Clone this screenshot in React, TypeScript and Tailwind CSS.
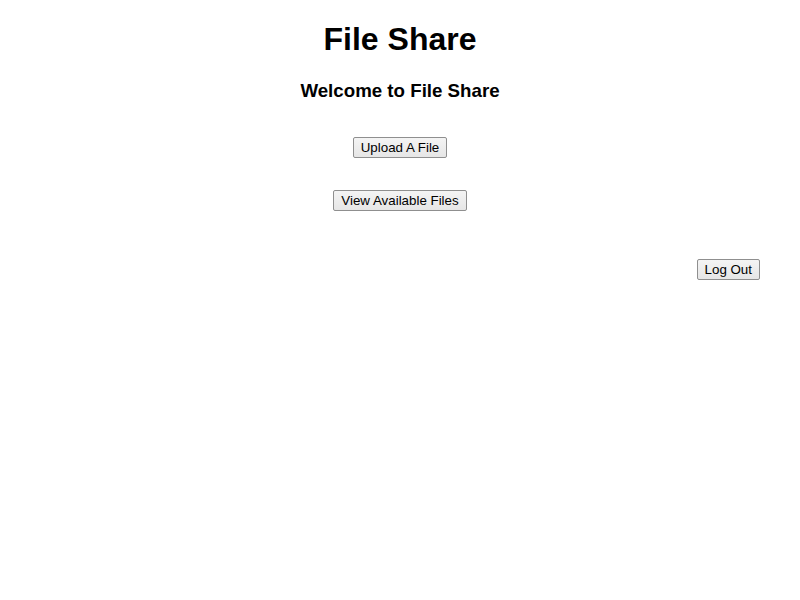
import React from "react";

const btn =
  "border border-[#8f8f8f] bg-gradient-to-b from-[#f4f4f4] to-[#e6e6e6] rounded-[2px] px-[7px] py-[2px] text-[13.33px] leading-[15px] text-black font-['Liberation_Sans',Arial,sans-serif]";

export default function App() {
  return (
    <div className="min-h-[600px] bg-white font-['Liberation_Sans',Arial,sans-serif] text-black">
      <div className="flex flex-col items-center pt-[21px]">
        <h1 className="text-[32px] leading-[37px] font-bold">File Share</h1>
        <h3 className="mt-[22px] text-[18.72px] leading-[22px] font-bold">
          Welcome to File Share
        </h3>
        <button className={`${btn} mt-[35px]`}>Upload A File</button>
        <button className={`${btn} mt-[32px]`}>View Available Files</button>
      </div>
      <div className="flex justify-end pr-[40px] mt-[48px]">
        <button className={btn}>Log Out</button>
      </div>
    </div>
  );
}
